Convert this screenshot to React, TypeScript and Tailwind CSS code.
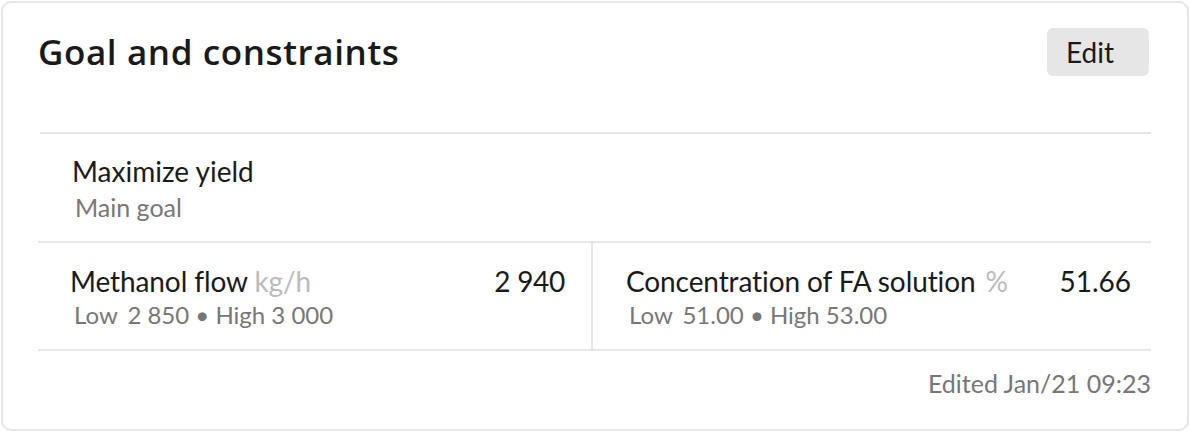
import React from "react";

export default function App() {
  return (
    <div className="p-px" style={{ fontFamily: "Lato, 'Noto Sans', sans-serif" }}>
      <div className="h-[430px] rounded-[10px] border-2 border-[#e6e6e6] bg-white pl-[35px] pr-[36px] pt-[25px]">
        <div className="flex items-center justify-between">
          <h1
            className="text-[35px] font-semibold leading-[40px] tracking-[0.6px] text-[#1a1a1a]"
            style={{ fontFamily: "'Open Sans', Lato, sans-serif" }}
          >
            Goal and constraints
          </h1>
          <button className="mr-[2px] h-[48px] w-[102px] rounded-[6px] bg-[#e6e6e6] pl-[19px] text-left text-[28px] leading-[34px] text-[#1a1a1a]">Edit</button>
        </div>
        <div className="mt-[56px] ml-[2px] border-t-2 border-[#e6e6e6]">
          <div className="h-[107px] pl-[32px] pt-[20px]">
            <div className="text-[28px] leading-[34px] text-[#1a1a1a]">Maximize yield</div>
            <div className="mt-[4px] pl-[3px] text-[25px] leading-[30px] text-[#777]">Main goal</div>
          </div>
        </div>
        <div className="flex border-y-2 border-[#e6e6e6]">
          <div className="flex h-[106px] w-[555px] justify-between border-r-2 border-[#e6e6e6] pl-[32px] pr-[26px] pt-[21px]">
            <div>
              <div className="text-[28px] leading-[34px] tracking-[-0.1px] text-[#1a1a1a]">
                Methanol flow <span className="text-[#bbb]">kg/h</span>
              </div>
              <div className="mt-[2px] pl-[4px] text-[24px] leading-[30px] text-[#777]">
                Low <span className="ml-[4px]">2 850 • High 3 000</span>
              </div>
            </div>
            <div className="text-[28px] leading-[34px] tracking-[-0.3px] text-[#1a1a1a]">2 940</div>
          </div>
          <div className="flex flex-1 justify-between pl-[33px] pr-[20px] pt-[21px]">
            <div>
              <div className="text-[28px] leading-[34px] tracking-[-0.1px] text-[#1a1a1a]">
                Concentration of FA solution <span className="ml-[3px] text-[#bbb]">%</span>
              </div>
              <div className="mt-[2px] pl-[3px] text-[24px] leading-[30px] text-[#777]">
                Low <span className="ml-[4px]">51.00 • High 53.00</span>
              </div>
            </div>
            <div className="text-[28px] leading-[34px] text-[#1a1a1a]">51.66</div>
          </div>
        </div>
        <div className="mt-[17px] text-right text-[25px] leading-[30px] text-[#777]">Edited Jan/21 09:23</div>
      </div>
    </div>
  );
}
